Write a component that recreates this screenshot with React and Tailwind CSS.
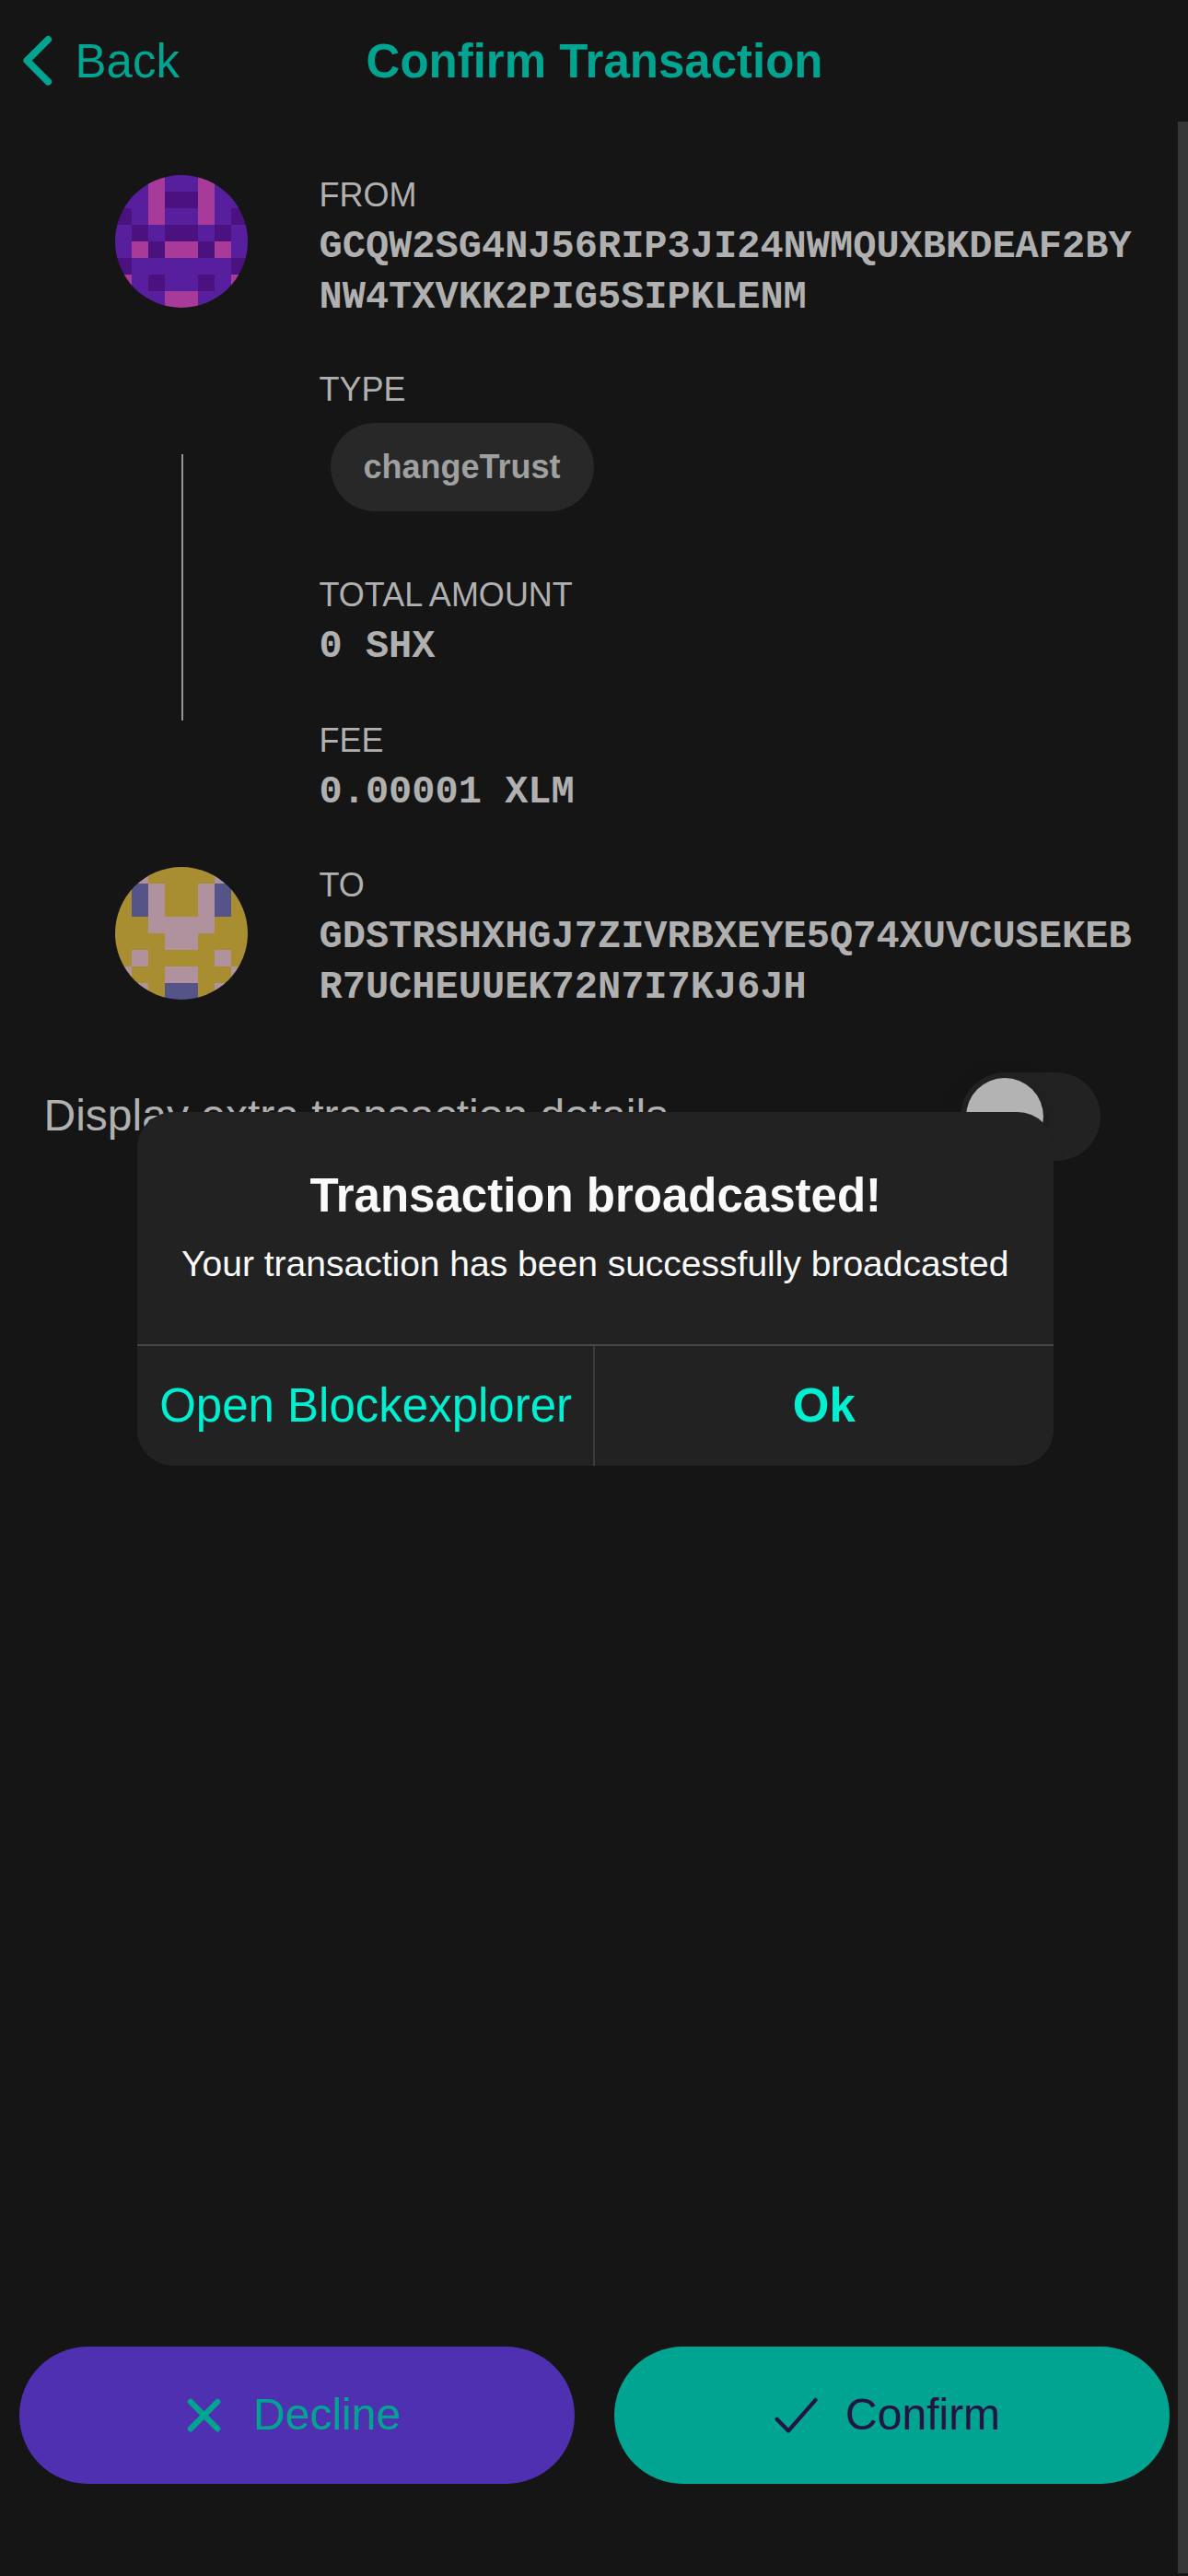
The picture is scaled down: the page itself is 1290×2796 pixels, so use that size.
import React from "react";

const FROM_COLORS = { P: "#571f9e", D: "#4b117e", M: "#a83a9a" };
const FROM_ROWS = ["PPMP", "PPMD", "DPMP", "PDPD", "PMDM", "DPPP", "MPDP", "PPPM"];

const TO_COLORS = { G: "#a88e30", K: "#b0929f", B: "#545488" };
const TO_ROWS = ["GKGG", "GBKG", "GBKG", "GGKK", "GGGK", "GKGG", "KGGK", "GKGB"];

/* Mirrored 8x8 identicon; each row lists its left half. */
function Identicon({ rows, colors }) {
  return (
    <svg viewBox="0 0 8 8" className="block size-[144px] shrink-0 rounded-full" shapeRendering="crispEdges">
      {rows.map((half, y) =>
        [...half, ...[...half].reverse()].map((c, x) => (
          <rect key={`${x}-${y}`} x={x} y={y} width="1" height="1" fill={colors[c]} />
        ))
      )}
    </svg>
  );
}

function Label({ children }) {
  return <div className="text-[36px] leading-[55px] whitespace-nowrap">{children}</div>;
}

function Value({ children }) {
  return (
    <div className="mt-[2px] font-['Courier_New','Liberation_Mono',monospace] text-[42px] leading-[54.6px] font-bold whitespace-nowrap">
      {children}
    </div>
  );
}

function Header() {
  return (
    <header className="grid h-[132px] grid-cols-[1fr_auto_1fr] items-center text-[51px] leading-[60px] text-[#00a490]">
      <button className="flex items-center">
        <svg viewBox="0 0 512 512" className="size-[81.6px] shrink-0" fill="none">
          <path
            d="M328 112L184 256l144 144"
            stroke="currentColor"
            strokeWidth="48"
            strokeLinecap="round"
            strokeLinejoin="round"
          />
        </svg>
        <span className="pt-[2px]">Back</span>
      </button>
      <h1 className="pt-[2px] pl-[1px] font-bold">Confirm Transaction</h1>
      <span />
    </header>
  );
}

function Alert() {
  return (
    <div className="absolute top-[1207px] left-[149px] w-[994.5px] overflow-hidden rounded-[39px] bg-[#222222] text-center">
      <div className="flex h-[252px] flex-col items-center pt-[61px] text-[#fafafa]">
        <h2 className="pl-[1px] text-[51px] leading-[60px] font-bold">Transaction broadcasted!</h2>
        <p className="mt-[20px] text-[39px] leading-[48px] whitespace-nowrap">
          Your transaction has been successfully broadcasted
        </p>
      </div>
      <div className="grid h-[132px] grid-cols-2 border-t-2 border-[#464646] text-[51px] text-[#00efd1]">
        <button className="border-r-2 border-[#3c3c3c] pl-[1px] whitespace-nowrap">Open Blockexplorer</button>
        <button className="font-bold">Ok</button>
      </div>
    </div>
  );
}

export default function App() {
  return (
    <div className="relative flex h-[2796px] w-[1290px] flex-col overflow-hidden bg-[#151515] font-['Liberation_Sans',Arial,sans-serif]">
      <Header />
      <div className="flex min-h-0 flex-1">
        <div className="flex w-[1279px] shrink-0 flex-col">
          <main className="flex-1 text-[#b0b0b0]">
            <div className="flex h-[966px] pt-[51px]">
              <div className="flex w-[346.5px] flex-col items-center pt-[7px] pl-[47.5px]">
                <Identicon rows={FROM_ROWS} colors={FROM_COLORS} />
                <div className="mt-[159px] mb-[159px] ml-[2px] h-[289px] w-[2px] shrink-0 bg-[#959595]" />
                <Identicon rows={TO_ROWS} colors={TO_COLORS} />
              </div>
              <div className="flex flex-col items-start pt-px">
                <Label>FROM</Label>
                <Value>
                  GCQW2SG4NJ56RIP3JI24NWMQUXBKDEAF2BY
                  <br />
                  NW4TXVKK2PIG5SIPKLENM
                </Value>
                <div className="h-[45px] shrink-0" />
                <Label>TYPE</Label>
                <span className="mt-[9px] mb-[63px] ml-[12px] flex h-[96px] shrink-0 items-center rounded-full bg-[#282828] px-[36px] text-[36px] leading-[42px] font-bold text-[#a0a0a0]">
                  changeTrust
                </span>
                <Label>TOTAL AMOUNT</Label>
                <Value>0 SHX</Value>
                <div className="h-[46px] shrink-0" />
                <Label>FEE</Label>
                <Value>0.00001 XLM</Value>
                <div className="h-[46px] shrink-0" />
                <Label>TO</Label>
                <Value>
                  GDSTRSHXHGJ7ZIVRBXEYE5Q74XUVCUSEKEB
                  <br />
                  R7UCHEUUEK72N7I7KJ6JH
                </Value>
              </div>
            </div>
            <div className="mt-[66px] flex h-[96px] items-center justify-between pr-[84px] pl-[47.5px] text-[48px] leading-[58px]">
              <span className="relative -top-[1px]">Display extra transaction details</span>
              <span className="flex h-[96px] w-[152px] items-center rounded-full bg-[#222222] pl-[6px]">
                <span className="size-[84px] rounded-full bg-[#b3b3b3] shadow-[0_9px_36px_rgba(0,0,0,0.12),0_3px_3px_rgba(0,0,0,0.16)]" />
              </span>
            </div>
          </main>
          <footer className="flex gap-[43px] pb-[100px] pl-[20.5px] text-[48px] leading-[56px]">
            <button className="flex h-[149px] w-[603px] items-center justify-center gap-[20px] rounded-full bg-[#4f30b0] pr-[21px] text-[#00a490]">
              <svg viewBox="0 0 512 512" className="size-[67.2px]" fill="none">
                <path d="M144 144l224 224M368 144L144 368" stroke="currentColor" strokeWidth="48" strokeLinecap="round" />
              </svg>
              <span className="relative -top-[1px]">Decline</span>
            </button>
            <button className="flex h-[149px] w-[603px] items-center justify-center gap-[20px] rounded-full bg-[#00a490] pr-[19px] text-[#221540]">
              <svg viewBox="0 0 512 512" className="size-[67.2px]" fill="none">
                <path
                  d="M416 128L192 384l-96-96"
                  stroke="currentColor"
                  strokeWidth="32"
                  strokeLinecap="round"
                  strokeLinejoin="round"
                />
              </svg>
              <span className="relative -top-[1px]">Confirm</span>
            </button>
          </footer>
        </div>
        <div className="mb-[3px] flex-1 bg-[#373737]" />
      </div>
      <Alert />
    </div>
  );
}
